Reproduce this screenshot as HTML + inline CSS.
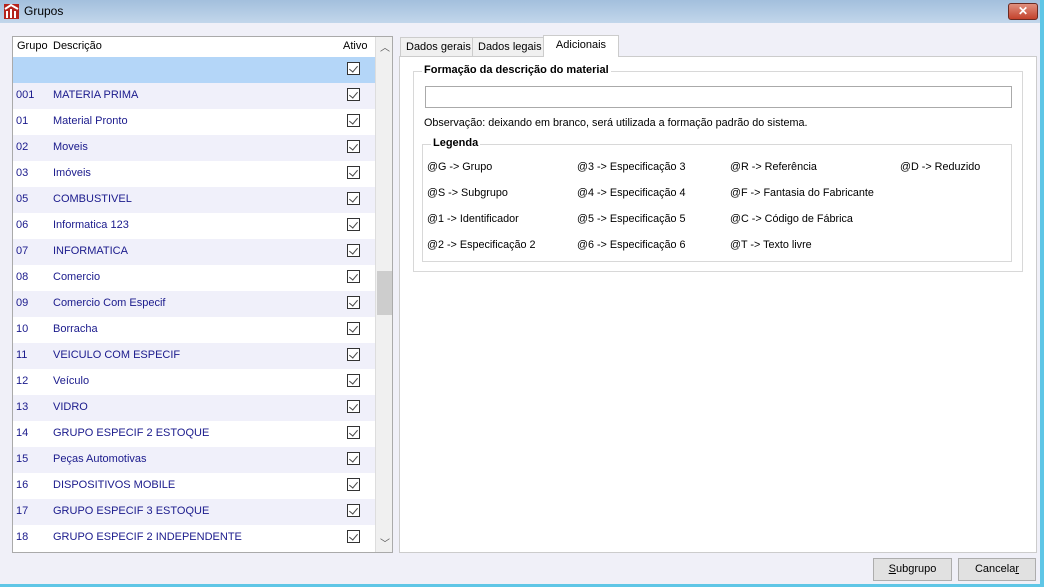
<!DOCTYPE html>
<html><head><meta charset="utf-8"><style>
*{box-sizing:border-box;margin:0;padding:0}
body{width:1044px;height:587px;overflow:hidden;background:#f0f0f8;font-family:"Liberation Sans",sans-serif;font-size:11px;color:#000;position:relative}
.title{position:absolute;left:0;top:0;width:1044px;height:23px;background:linear-gradient(#a3bfdd,#c2d6eb);}
.title span{position:absolute;left:24px;top:4px;font-size:12px}
.edge{position:absolute;right:0;top:0;width:4px;height:587px;background:#5fc6e6}
.edgeb{position:absolute;left:0;bottom:0;width:1044px;height:3px;background:#5fc6e6}
.close{position:absolute;left:1008px;top:3px;width:30px;height:17px;border:1px solid #6b2a22;border-radius:3px;background:linear-gradient(#e0907f,#c4422c);color:#fff;font-weight:bold;text-align:center;font-size:12px;line-height:15px}
.grid{position:absolute;left:12px;top:36px;width:381px;height:517px;border:1px solid #aaa;background:#fff;overflow:hidden}
.hdr{position:absolute;left:0;top:0;width:362px;height:20px;background:#fff}
.hdr span{position:absolute;top:3px}
.row{position:absolute;left:0;width:362px;height:26px;color:#1a1a8c}
.row span{position:absolute;top:6px}
.cb{position:absolute;left:334px;top:5px;width:13px;height:13px;border:1px solid #333;background:#fff}
.cb:after{content:"";position:absolute;left:3px;top:1px;width:4px;height:7px;border:solid #444;border-width:0 1.5px 1.5px 0;transform:rotate(40deg)}
.sb{position:absolute;left:362px;top:0;width:18px;height:515px;background:#f0f0f0;border-left:1px solid #ddd}
.thumb{position:absolute;left:1px;top:234px;width:15px;height:44px;background:#cdcdcd}
.panel{position:absolute;left:399px;top:56px;width:638px;height:497px;background:#fff;border:1px solid #ccc}
.tab{position:absolute;top:37px;height:20px;border:1px solid #ccc;background:#f0f0f0;padding:3px 5px;font-size:11px}
.gb{position:absolute;border:1px solid #d8d8d8}
.gbt{position:absolute;top:-8px;left:8px;background:#fff;padding:0 2px;font-weight:bold;font-size:11px}
.t{position:absolute;font-size:10.8px}
.btn{position:absolute;top:558px;height:23px;border:1px solid #adadad;background:#e1e1e1;text-align:center;line-height:21px;font-size:11px}
</style></head><body>
<div class="title"><svg style="position:absolute;left:4px;top:4px" width="15" height="15"><rect width="15" height="15" fill="#b4231c"/><path d="M1 5 L7 1 L14 5 M3 14 V7 M7 14 V5 M11 14 V7" stroke="#fff" stroke-width="2" fill="none"/></svg><span>Grupos</span></div>
<div class="close">✕</div>
<div class="edge"></div><div class="edgeb"></div>
<div class="grid">
<div class="hdr"><span style="left:4px">Grupo</span><span style="left:40px">Descrição</span><span style="left:330px">Ativo</span></div>
<div class="row" style="top:20px;background:#b4d6f8"><div class="cb"></div></div>
<div class="row" style="top:46px;background:#f0f0fa"><span style="left:3px">001</span><span style="left:40px">MATERIA PRIMA</span><div class="cb"></div></div>
<div class="row" style="top:72px"><span style="left:3px">01</span><span style="left:40px">Material Pronto</span><div class="cb"></div></div>
<div class="row" style="top:98px;background:#f0f0fa"><span style="left:3px">02</span><span style="left:40px">Moveis</span><div class="cb"></div></div>
<div class="row" style="top:124px"><span style="left:3px">03</span><span style="left:40px">Imóveis</span><div class="cb"></div></div>
<div class="row" style="top:150px;background:#f0f0fa"><span style="left:3px">05</span><span style="left:40px">COMBUSTIVEL</span><div class="cb"></div></div>
<div class="row" style="top:176px"><span style="left:3px">06</span><span style="left:40px">Informatica 123</span><div class="cb"></div></div>
<div class="row" style="top:202px;background:#f0f0fa"><span style="left:3px">07</span><span style="left:40px">INFORMATICA</span><div class="cb"></div></div>
<div class="row" style="top:228px"><span style="left:3px">08</span><span style="left:40px">Comercio</span><div class="cb"></div></div>
<div class="row" style="top:254px;background:#f0f0fa"><span style="left:3px">09</span><span style="left:40px">Comercio Com Especif</span><div class="cb"></div></div>
<div class="row" style="top:280px"><span style="left:3px">10</span><span style="left:40px">Borracha</span><div class="cb"></div></div>
<div class="row" style="top:306px;background:#f0f0fa"><span style="left:3px">11</span><span style="left:40px">VEICULO COM ESPECIF</span><div class="cb"></div></div>
<div class="row" style="top:332px"><span style="left:3px">12</span><span style="left:40px">Veículo</span><div class="cb"></div></div>
<div class="row" style="top:358px;background:#f0f0fa"><span style="left:3px">13</span><span style="left:40px">VIDRO</span><div class="cb"></div></div>
<div class="row" style="top:384px"><span style="left:3px">14</span><span style="left:40px">GRUPO ESPECIF 2 ESTOQUE</span><div class="cb"></div></div>
<div class="row" style="top:410px;background:#f0f0fa"><span style="left:3px">15</span><span style="left:40px">Peças Automotivas</span><div class="cb"></div></div>
<div class="row" style="top:436px"><span style="left:3px">16</span><span style="left:40px">DISPOSITIVOS MOBILE</span><div class="cb"></div></div>
<div class="row" style="top:462px;background:#f0f0fa"><span style="left:3px">17</span><span style="left:40px">GRUPO ESPECIF 3 ESTOQUE</span><div class="cb"></div></div>
<div class="row" style="top:488px"><span style="left:3px">18</span><span style="left:40px">GRUPO ESPECIF 2 INDEPENDENTE</span><div class="cb"></div></div>
<div class="sb"><span style="position:absolute;left:4px;top:2px;font-size:10px;color:#555">︿</span><div class="thumb"></div><span style="position:absolute;left:4px;top:498px;font-size:10px;color:#555">﹀</span></div>
</div>
<div class="panel">
<div class="gb" style="left:13px;top:14px;width:610px;height:201px">
<div class="gbt">Formação da descrição do material</div>
<div style="position:absolute;left:11px;top:14px;width:587px;height:22px;border:1px solid #aaa"></div>
<div class="t" style="left:10px;top:45px">Observação: deixando em branco, será utilizada a formação padrão do sistema.</div>
<div class="gb" style="left:8px;top:72px;width:590px;height:118px">
<div class="gbt" style="left:8px">Legenda</div>
<div class="t" style="left:4px;top:16px">@G -&gt; Grupo</div>
<div class="t" style="left:4px;top:42px">@S -&gt; Subgrupo</div>
<div class="t" style="left:4px;top:68px">@1 -&gt; Identificador</div>
<div class="t" style="left:4px;top:94px">@2 -&gt; Especificação 2</div>
<div class="t" style="left:154px;top:16px">@3 -&gt; Especificação 3</div>
<div class="t" style="left:154px;top:42px">@4 -&gt; Especificação 4</div>
<div class="t" style="left:154px;top:68px">@5 -&gt; Especificação 5</div>
<div class="t" style="left:154px;top:94px">@6 -&gt; Especificação 6</div>
<div class="t" style="left:307px;top:16px">@R -&gt; Referência</div>
<div class="t" style="left:307px;top:42px">@F -&gt; Fantasia do Fabricante</div>
<div class="t" style="left:307px;top:68px">@C -&gt; Código de Fábrica</div>
<div class="t" style="left:307px;top:94px">@T -&gt; Texto livre</div>
<div class="t" style="left:477px;top:16px">@D -&gt; Reduzido</div>
</div></div></div>
<div class="tab" style="left:400px">Dados gerais</div>
<div class="tab" style="left:472px">Dados legais</div>
<div class="tab" style="left:543px;top:35px;height:22px;width:76px;background:#fff;border-bottom:none;text-align:center">Adicionais</div>
<div class="btn" style="left:873px;width:79px"><u>S</u>ubgrupo</div>
<div class="btn" style="left:958px;width:78px">Cancela<u>r</u></div>
</body></html>
